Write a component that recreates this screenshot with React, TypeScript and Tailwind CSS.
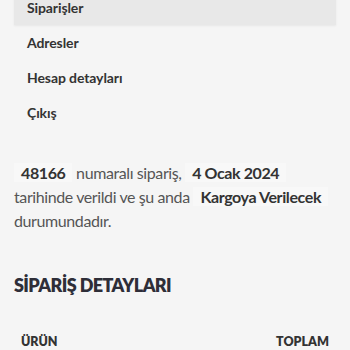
export default function App() {
  const menu = ['Siparişler', 'Adresler', 'Hesap detayları', 'Çıkış'];

  return (
    <main className="min-h-screen h-[350px] overflow-hidden bg-[#f5f5f5] px-[14px] font-['Lato',sans-serif]">
      {/* Account menu */}
      <ul className="mt-[-10px]">
        {menu.map((item, i) => (
          <li
            key={item}
            className={
              'px-[13px] py-[7.6px] text-[14px] leading-5 font-bold text-[#333] tracking-[-0.1px] ' +
              (i === 0 ? 'bg-[#e8e8e8] shadow-[0_1px_2px_rgba(0,0,0,0.06)]' : '')
            }
          >
            {item}
          </li>
        ))}
      </ul>

      {/* Order summary */}
      <p className="mt-[30px] text-[16px] leading-6 text-[#555] tracking-[-0.4px]">
        <mark className="bg-[#f8f8f8] px-[7px] font-bold text-[#333]">48166</mark> numaralı sipariş,{' '}
        <mark className="bg-[#f8f8f8] px-[7px] font-bold text-[#333]">4 Ocak 2024</mark> tarihinde verildi ve şu anda{' '}
        <mark className="bg-[#f8f8f8] px-[7px] font-bold text-[#333] whitespace-nowrap">Kargoya Verilecek</mark> durumundadır.
      </p>

      {/* Order details */}
      <h2 className="mt-[38px] text-[18px] leading-7 font-extrabold text-[#2e2e38] tracking-[-0.6px]">
        SİPARİŞ DETAYLARI
      </h2>
      <div className="mt-[33px] flex justify-between px-[7px] text-[12.5px] leading-5 font-extrabold text-[#333]">
        <span>ÜRÜN</span>
        <span>TOPLAM</span>
      </div>
    </main>
  );
}
